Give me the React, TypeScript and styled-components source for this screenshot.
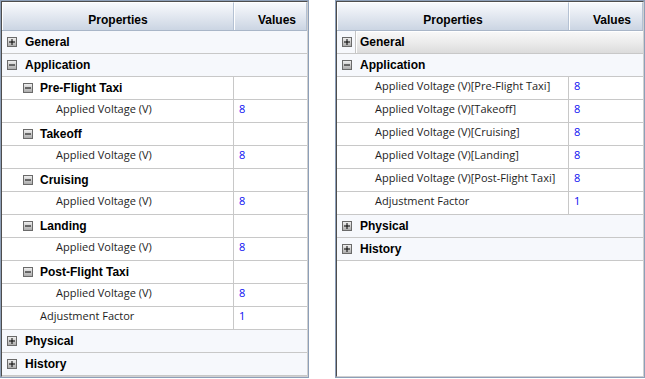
import React from "react";
import styled, { createGlobalStyle, css } from "styled-components";

const GlobalStyle = createGlobalStyle`
  html, body {
    margin: 0;
    padding: 0;
    background: #ffffff;
  }
`;

const Page = styled.div`
  display: flex;
  gap: 26px;
  align-items: flex-start;
`;

const Panel = styled.div<{ $width: number }>`
  width: ${(p) => p.$width}px;
  height: 378px;
  box-sizing: border-box;
  border: 1px solid #8d9fb8;
  display: flex;
`;

const Frame = styled.div`
  flex: 1;
  min-width: 0;
  display: flex;
  flex-direction: column;
  border-style: solid;
  border-width: 1px;
  border-color: #4d4d4d #d0d0d0 #d0d0d0 #4d4d4d;
  background: #ffffff;
  overflow: hidden;
`;

const Header = styled.div`
  display: grid;
  grid-template-columns: 232px 1fr;
  height: 29px;
  flex: none;
  box-sizing: border-box;
  border-bottom: 1px solid #a9b6c8;
`;

const HeaderCell = styled.div<{ $center?: boolean }>`
  display: flex;
  align-items: center;
  justify-content: ${(p) => (p.$center ? "center" : "flex-start")};
  padding-left: ${(p) => (p.$center ? 0 : 23)}px;
  padding-top: 6px;
  box-sizing: border-box;
  background: linear-gradient(to bottom, #f7f9fc 0%, #e4e9f1 45%, #cbd5e3 100%);
  border-left: 1px solid #ffffff;
  border-top: 1px solid #ffffff;
  border-right: 1px solid #b4c1d3;
  font-family: "Liberation Sans", Arial, sans-serif;
  font-weight: 700;
  font-size: 12px;
  color: #000;
`;

const Row = styled.div<{ $kind: "category" | "group" | "item" }>`
  height: 23px;
  flex: none;
  box-sizing: border-box;
  border-bottom: 1px solid #c8c8c8;
  display: ${(p) => (p.$kind === "category" ? "flex" : "grid")};
  grid-template-columns: 232px 1fr;
  align-items: stretch;
  background: ${(p) => (p.$kind === "category" ? "#f6f8fc" : "#ffffff")};
`;

const ToggleSlot = styled.div`
  width: 18px;
  flex: none;
  padding-left: 5px;
  box-sizing: border-box;
  display: flex;
  align-items: center;
`;

const CategoryLabel = styled.div<{ $selected?: boolean }>`
  flex: 1;
  display: flex;
  align-items: center;
  padding-left: 5px;
  font-family: "Liberation Sans", Arial, sans-serif;
  font-weight: 700;
  font-size: 12px;
  color: #000;
  ${(p) =>
    p.$selected &&
    css`
      background: linear-gradient(to bottom, #f9f9f9 0%, #ececec 50%, #dcdcdc 100%);
      border-left: 1px solid #c4c4c4;
      box-shadow: inset 1px 1px 0 #ffffff;
      padding-left: 4px;
    `}
`;

const NameCell = styled.div<{ $indent: number; $bold?: boolean }>`
  display: flex;
  align-items: center;
  gap: 7px;
  padding-left: ${(p) => p.$indent}px;
  border-right: 1px solid #c8c8c8;
  white-space: nowrap;
  overflow: hidden;
  ${(p) =>
    p.$bold
      ? css`
          font-family: "Liberation Sans", Arial, sans-serif;
          font-weight: 700;
          font-size: 12px;
          color: #000;
        `
      : css`
          font-family: "Open Sans", "Liberation Sans", sans-serif;
          font-size: 11px;
          color: #1e1e1e;
          padding-bottom: 5px;
        `}
`;

const ValueCell = styled.div`
  display: flex;
  align-items: center;
  padding-left: 5px;
  padding-bottom: 5px;
  font-family: "Open Sans", "Liberation Sans", sans-serif;
  font-size: 11px;
  color: #0c0cf2;
`;

const Toggle = ({ open }: { open: boolean }) => (
  <svg width="10" height="10" viewBox="0 0 10 10" style={{ display: "block", flex: "none" }}>
    <defs>
      <linearGradient id="tg" x1="0" y1="0" x2="0" y2="1">
        <stop offset="0" stopColor="#f2f2f2" />
        <stop offset="1" stopColor="#a8a8a8" />
      </linearGradient>
    </defs>
    <rect x="0.5" y="0.5" width="9" height="9" fill="url(#tg)" stroke="#6a6a6a" />
    <line x1="2" y1="5" x2="8" y2="5" stroke="#000" strokeWidth="1" />
    {!open && <line x1="5" y1="2" x2="5" y2="8" stroke="#000" strokeWidth="1" />}
  </svg>
);

type Entry =
  | { kind: "category"; label: string; open: boolean; selected?: boolean }
  | { kind: "group"; label: string }
  | { kind: "item"; label: string; value: string; indent: number };

const phases = ["Pre-Flight Taxi", "Takeoff", "Cruising", "Landing", "Post-Flight Taxi"];

const leftEntries: Entry[] = [
  { kind: "category", label: "General", open: false },
  { kind: "category", label: "Application", open: true },
  ...phases.flatMap((p): Entry[] => [
    { kind: "group", label: p },
    { kind: "item", label: "Applied Voltage (V)", value: "8", indent: 54 },
  ]),
  { kind: "item", label: "Adjustment Factor", value: "1", indent: 38 },
  { kind: "category", label: "Physical", open: false },
  { kind: "category", label: "History", open: false },
];

const rightEntries: Entry[] = [
  { kind: "category", label: "General", open: false, selected: true },
  { kind: "category", label: "Application", open: true },
  ...phases.map((p): Entry => ({
    kind: "item",
    label: `Applied Voltage (V)[${p}]`,
    value: "8",
    indent: 38,
  })),
  { kind: "item", label: "Adjustment Factor", value: "1", indent: 38 },
  { kind: "category", label: "Physical", open: false },
  { kind: "category", label: "History", open: false },
];

const Grid = ({ entries, width }: { entries: Entry[]; width: number }) => (
  <Panel $width={width}>
    <Frame>
      <Header>
        <HeaderCell $center>Properties</HeaderCell>
        <HeaderCell>Values</HeaderCell>
      </Header>
      {entries.map((e, i) => {
        if (e.kind === "category") {
          return (
            <Row key={i} $kind="category">
              <ToggleSlot>
                <Toggle open={e.open} />
              </ToggleSlot>
              <CategoryLabel $selected={e.selected}>{e.label}</CategoryLabel>
            </Row>
          );
        }
        if (e.kind === "group") {
          return (
            <Row key={i} $kind="group">
              <NameCell $indent={21} $bold>
                <Toggle open />
                {e.label}
              </NameCell>
              <ValueCell />
            </Row>
          );
        }
        return (
          <Row key={i} $kind="item">
            <NameCell $indent={e.indent}>{e.label}</NameCell>
            <ValueCell>{e.value}</ValueCell>
          </Row>
        );
      })}
    </Frame>
  </Panel>
);

export default function App() {
  return (
    <>
      <GlobalStyle />
      <Page>
        <Grid entries={leftEntries} width={309} />
        <Grid entries={rightEntries} width={310} />
      </Page>
    </>
  );
}
